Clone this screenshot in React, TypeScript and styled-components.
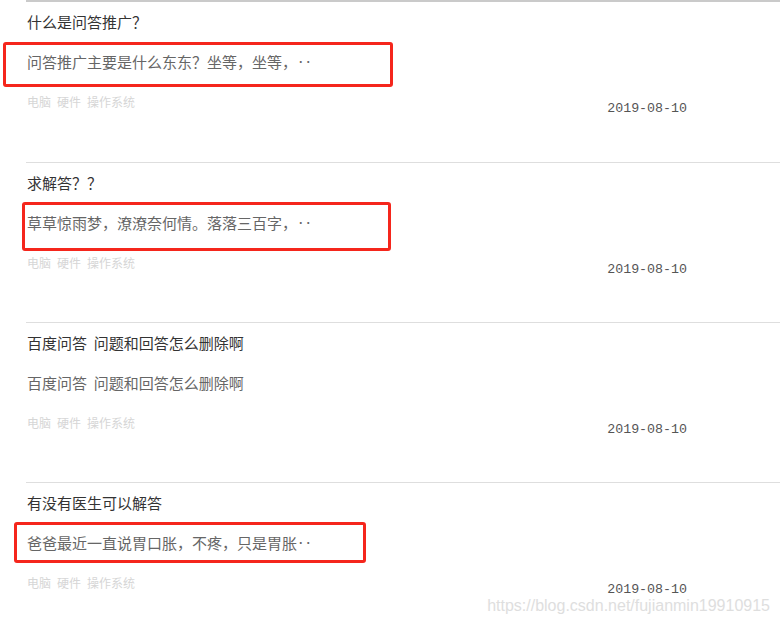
import React from 'react';
import styled, { createGlobalStyle } from 'styled-components';

const GlobalStyle = createGlobalStyle`
  html, body {
    margin: 0;
    padding: 0;
    background: #fff;
  }
  body {
    font-family: 'Noto Sans CJK SC', 'Liberation Sans', sans-serif;
    width: 780px;
    height: 625px;
    overflow: hidden;
    position: relative;
  }
`;

type Mark = { left: number; top: number; width: number; height: number };

type Question = {
  title: string;
  desc: string;
  tags: string[];
  date: string;
  mark?: Mark;
};

const questions: Question[] = [
  {
    title: '什么是问答推广？',
    desc: '问答推广主要是什么东东？坐等，坐等，‥',
    tags: ['电脑', '硬件', '操作系统'],
    date: '2019-08-10',
    mark: { left: -23, top: 40, width: 390, height: 45 },
  },
  {
    title: '求解答？？',
    desc: '草草惊雨梦，潦潦奈何情。落落三百字，‥',
    tags: ['电脑', '硬件', '操作系统'],
    date: '2019-08-10',
    mark: { left: -4, top: 39, width: 369, height: 49 },
  },
  {
    title: '百度问答  问题和回答怎么删除啊',
    desc: '百度问答  问题和回答怎么删除啊',
    tags: ['电脑', '硬件', '操作系统'],
    date: '2019-08-10',
  },
  {
    title: '有没有医生可以解答',
    desc: '爸爸最近一直说胃口胀，不疼，只是胃胀‥',
    tags: ['电脑', '硬件', '操作系统'],
    date: '2019-08-10',
    mark: { left: -12, top: 39, width: 352, height: 41 },
  },
];

const List = styled.ul`
  list-style: none;
  margin: 0 0 0 26px;
  padding: 0;
  border-top: 2px solid #cacaca;
`;

const Item = styled.li`
  position: relative;
  height: 159px;
  padding: 0 0 0 1px;
  border-bottom: 1px solid #dedede;

  &:first-child {
    height: 160px;
  }
  &:last-child {
    border-bottom: none;
  }
`;

const Title = styled.h3`
  margin: 0;
  padding-top: 10px;
  font-size: 15px;
  line-height: 20px;
  font-weight: normal;
  color: #333;
  white-space: pre;
`;

const Desc = styled.p`
  margin: 20px 0 0;
  font-size: 15px;
  line-height: 20px;
  color: #666;
  white-space: pre;
`;

const Footer = styled.div`
  display: flex;
  align-items: flex-start;
  justify-content: space-between;
  margin-top: 20px;
  padding-right: 93px;
`;

const Tags = styled.div`
  display: flex;
  gap: 6px;
  font-size: 12px;
  line-height: 20px;
  color: #d6d6d6;
`;

const Date = styled.span`
  margin-top: 7px;
  font-family: 'Liberation Mono', 'DejaVu Sans Mono', monospace;
  font-size: 13.3px;
  line-height: 20px;
  color: #555;
`;

const Marker = styled.div`
  position: absolute;
  border: 3px solid #f5261c;
  border-radius: 3px;
  box-sizing: border-box;
  pointer-events: none;
`;

const Watermark = styled.div`
  position: absolute;
  right: 10px;
  bottom: 9px;
  font-family: 'Liberation Sans', Arial, sans-serif;
  font-size: 16px;
  line-height: 20px;
  color: #dedede;
`;

export default function App() {
  return (
    <>
      <GlobalStyle />
      <List>
        {questions.map((q, i) => (
          <Item key={i}>
            <Title>{q.title}</Title>
            <Desc>{q.desc}</Desc>
            <Footer>
              <Tags>
                {q.tags.map((t) => (
                  <span key={t}>{t}</span>
                ))}
              </Tags>
              <Date>{q.date}</Date>
            </Footer>
            {q.mark && (
              <Marker
                style={{
                  left: q.mark.left,
                  top: q.mark.top,
                  width: q.mark.width,
                  height: q.mark.height,
                }}
              />
            )}
          </Item>
        ))}
      </List>
      <Watermark>https://blog.csdn.net/fujianmin19910915</Watermark>
    </>
  );
}
